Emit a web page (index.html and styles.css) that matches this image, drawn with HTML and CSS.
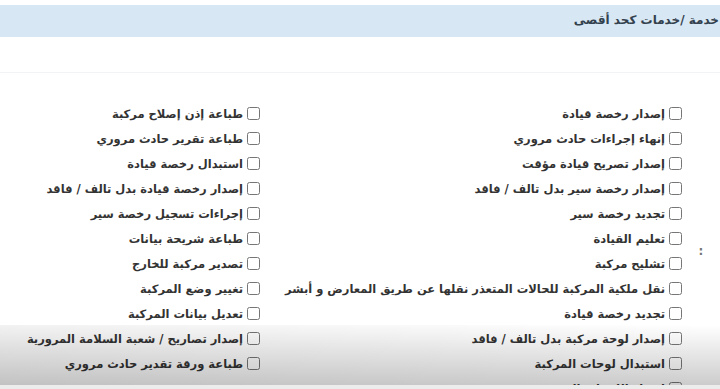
FILE: index.html
```html
<!DOCTYPE html>
<html lang="ar" dir="rtl">
<head>
  <meta charset="UTF-8">
  <title>الخدمات</title>
  <link rel="stylesheet" href="styles.css">
</head>
<body>
  <div class="page">
    <div class="title-bar">خدمة /خدمات كحد أقصى</div>
    <div class="divider"></div>

    <div class="services">
      <div class="colon">:</div>
      <div class="grid">
        <label><input type="checkbox"> إصدار رخصة قيادة</label>
        <label><input type="checkbox"> طباعة إذن إصلاح مركبة</label>
        <label><input type="checkbox"> إنهاء إجراءات حادث مروري</label>
        <label><input type="checkbox"> طباعة تقرير حادث مروري</label>
        <label><input type="checkbox"> إصدار تصريح قيادة مؤقت</label>
        <label><input type="checkbox"> استبدال رخصة قيادة</label>
        <label><input type="checkbox"> إصدار رخصة سير بدل تالف / فاقد</label>
        <label><input type="checkbox"> إصدار رخصة قيادة بدل تالف / فاقد</label>
        <label><input type="checkbox"> تجديد رخصة سير</label>
        <label><input type="checkbox"> إجراءات تسجيل رخصة سير</label>
        <label><input type="checkbox"> تعليم القيادة</label>
        <label><input type="checkbox"> طباعة شريحة بيانات</label>
        <label><input type="checkbox"> تشليح مركبة</label>
        <label><input type="checkbox"> تصدير مركبة للخارج</label>
        <label><input type="checkbox"> نقل ملكية المركبة للحالات المتعذر نقلها عن طريق المعارض و أبشر</label>
        <label><input type="checkbox"> تغيير وضع المركبة</label>
        <label><input type="checkbox"> تجديد رخصة قيادة</label>
        <label><input type="checkbox"> تعديل بيانات المركبة</label>
        <label><input type="checkbox"> إصدار لوحة مركبة بدل تالف / فاقد</label>
        <label><input type="checkbox"> إصدار تصاريح / شعبة السلامة المرورية</label>
        <label><input type="checkbox"> استبدال لوحات المركبة</label>
        <label><input type="checkbox"> طباعة ورقة تقدير حادث مروري</label>
        <label><input type="checkbox"> إصدار اللوحات المؤقتة</label>
      </div>
    </div>

    <div class="shade"></div>
  </div>
</body>
</html>
```

FILE: styles.css
```css
html, body {
  margin: 0;
  height: 100%;
  overflow: hidden;
}

body {
  font-family: "DejaVu Sans", Tahoma, sans-serif;
  background: #fff;
  color: #2e2e2e;
}

.page {
  position: relative;
  height: 389px;
  overflow: hidden;
  padding-top: 5px;
  box-sizing: border-box;
}

.title-bar {
  height: 32px;
  line-height: 30px;
  background: #d7e7f3;
  font-size: 12px;
  font-weight: bold;
  color: #33414e;
  padding-right: 1px;
  white-space: nowrap;
}

.divider {
  height: 1px;
  background: #f2f3f5;
  margin-top: 35px;
}

.services {
  display: flex;
  margin-top: 28px;
}

.colon {
  width: 38px;
  flex: none;
  align-self: center;
  text-align: center;
  font-size: 12px;
  font-weight: bold;
  color: #777;
}

.grid {
  display: grid;
  grid-template-columns: 422px 1fr;
  grid-auto-rows: 25px;
}

.grid label {
  display: flex;
  align-items: center;
  gap: 2px;
  font-size: 11.5px;
  font-weight: bold;
  white-space: nowrap;
  color: #333;
}

.grid input {
  width: 13px;
  height: 13px;
  margin: 0 0 0 2px;
  flex: none;
}

.shade {
  position: absolute;
  left: 0;
  right: 0;
  bottom: 4px;
  height: 60px;
  background:
    linear-gradient(to right, rgba(0, 0, 0, 0.05), rgba(0, 0, 0, 0)),
    linear-gradient(to bottom, rgba(0, 0, 0, 0), rgba(0, 0, 0, 0.2));
  pointer-events: none;
}

.shade::after {
  content: "";
  position: absolute;
  left: 0;
  right: 0;
  bottom: -4px;
  height: 4px;
  background: #ececec;
}
```
